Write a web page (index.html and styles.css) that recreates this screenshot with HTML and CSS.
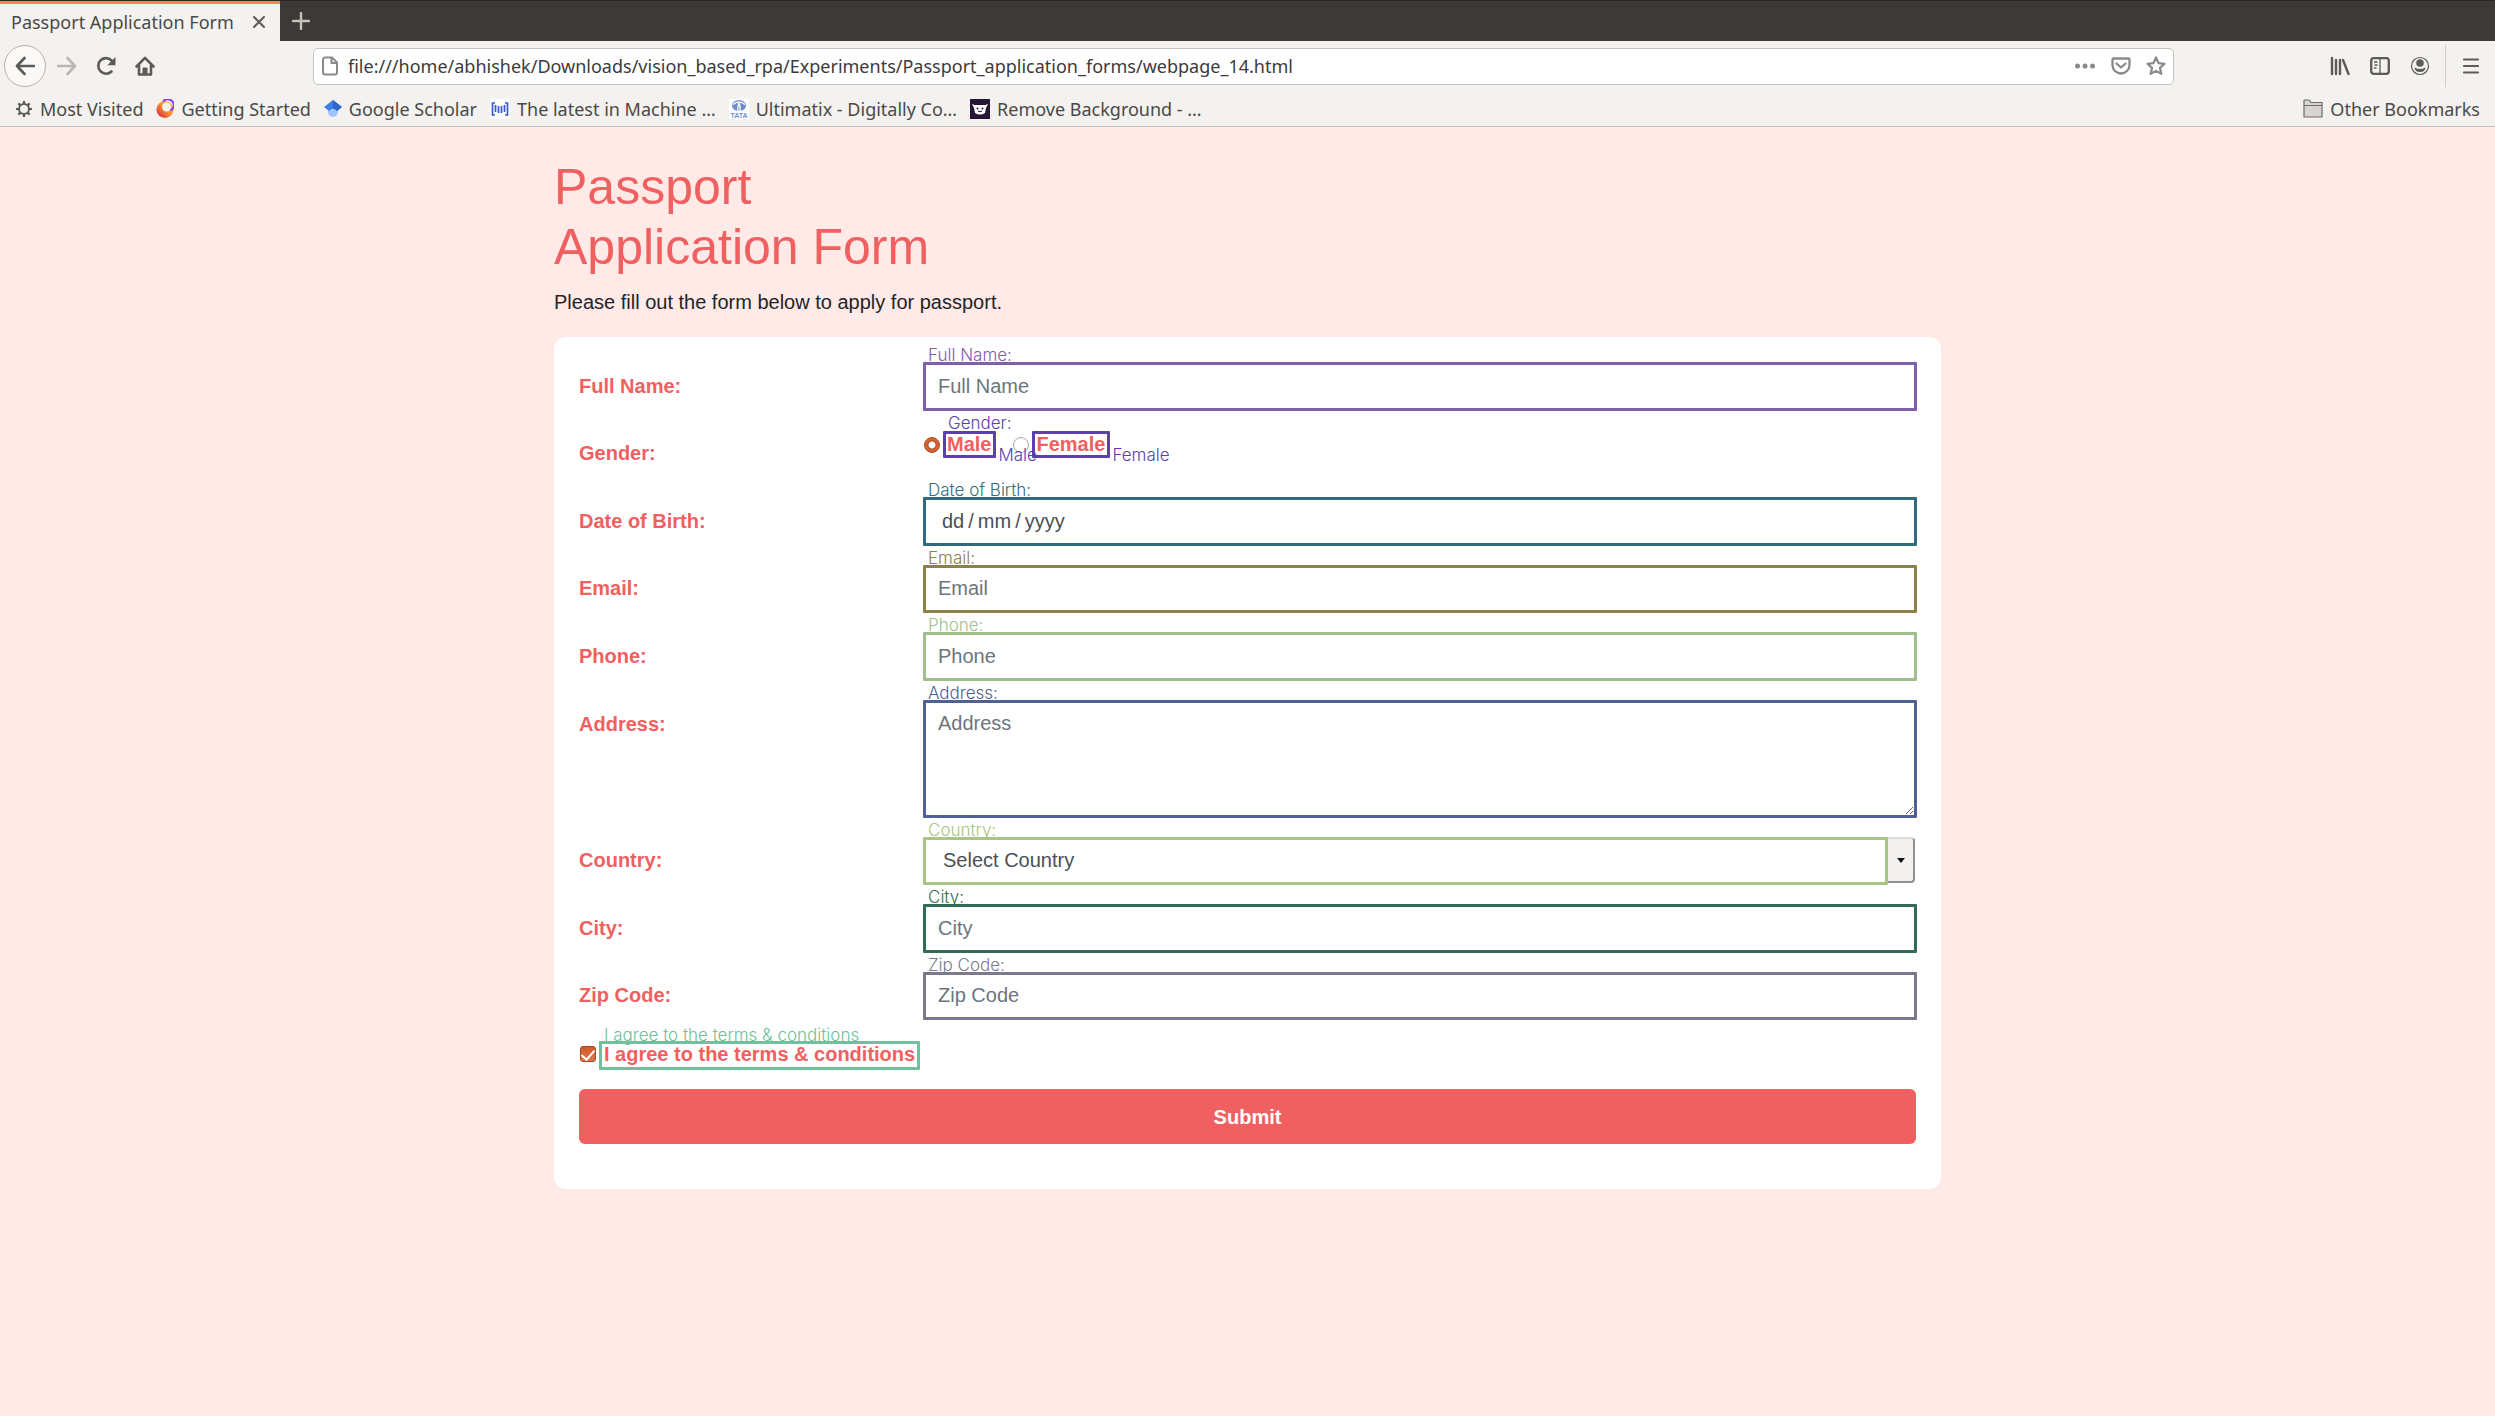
FILE: index.html
```html
<!DOCTYPE html>
<html lang="en">
<head>
<meta charset="utf-8">
<title>Passport Application Form</title>
<link rel="stylesheet" href="styles.css">
</head>
<body>
<header class="browser">
  <div class="tabs">
    <div class="tab"><span>Passport Application Form</span>
      <button class="icon-btn" aria-label="Close tab"><svg width="14" height="14" viewBox="0 0 14 14"><path d="M2 2l10 10M12 2L2 12" stroke="#5c5b59" stroke-width="2" stroke-linecap="round"/></svg></button>
    </div>
    <button class="icon-btn new-tab" aria-label="New tab"><svg width="18" height="18" viewBox="0 0 18 18"><path d="M9 1v16M1 9h16" stroke="#c5c2bb" stroke-width="2.4" stroke-linecap="round"/></svg></button>
  </div>
  <nav class="toolbar" aria-label="Navigation">
    <div class="nav-left">
      <button class="icon-btn back" aria-label="Back"><svg width="20" height="20" viewBox="0 0 20 20"><path d="M9.5 2L2 10l7.500 8M2 10h17" fill="none" stroke="#5c5b59" stroke-width="2.6" stroke-linecap="round" stroke-linejoin="round"/></svg></button>
      <button class="icon-btn" aria-label="Forward"><svg width="20" height="20" viewBox="0 0 20 20"><path d="M10.500 2L18 10l-7.500 8M18 10H1" fill="none" stroke="#bab8b6" stroke-width="2.600" stroke-linecap="round" stroke-linejoin="round"/></svg></button>
      <button class="icon-btn" aria-label="Reload"><svg width="20" height="20" viewBox="0 0 20 20"><path d="M16 4.800A7.800 7.800 0 1 0 15.500 15.500" fill="none" stroke="#5c5b59" stroke-width="2.600" stroke-linecap="round"/><path d="M19.500 1v8.200h-8.200z" fill="#5c5b59"/></svg></button>
      <button class="icon-btn" aria-label="Home"><svg width="20" height="20" viewBox="0 0 20 20"><path d="M1.500 10.500L10 1.800l8.500 8.700M4 9v9.500h12V9" fill="none" stroke="#5c5b59" stroke-width="2.600" stroke-linecap="round" stroke-linejoin="round"/><path d="M8 18v-6h4v6" fill="#5c5b59" stroke="#5c5b59"/></svg></button>
    </div>
    <div class="url">
      <svg width="18" height="20" viewBox="0 0 18 20"><path d="M4 1.500h7l5 5V16.500a2 2 0 0 1-2 2H4a2 2 0 0 1-2-2v-13a2 2 0 0 1 2-2zM10.500 1.500V7H16" fill="none" stroke="#8a8a8a" stroke-width="2"/></svg>
      <input type="text" aria-label="Address bar" value="file:///home/abhishek/Downloads/vision_based_rpa/Experiments/Passport_application_forms/webpage_14.html">
      <svg width="22" height="20" viewBox="0 0 22 20" fill="#8a8a8a"><circle cx="3.500" cy="10" r="2.500"/><circle cx="11" cy="10" r="2.500"/><circle cx="18.500" cy="10" r="2.500"/></svg>
      <svg width="20" height="20" viewBox="0 0 20 20" fill="none" stroke="#8a8a8a" stroke-width="2.300" stroke-linecap="round" stroke-linejoin="round"><path d="M2.500 2.500h15a1 1 0 0 1 1 1V9a8.500 8.500 0 0 1-17 0V3.500a1 1 0 0 1 1-1z"/><path d="M5.500 7.500l4.500 4 4.500-4"/></svg>
      <svg width="20" height="20" viewBox="0 0 20 20"><path d="M10 1.500l2.500 5.600 6 .7-4.500 4.100 1.300 6-5.300-3-5.300 3 1.300-6L1.500 7.800l6-.7z" fill="none" stroke="#8a8a8a" stroke-width="2.200" stroke-linejoin="round"/></svg>
    </div>
    <div class="nav-right">
      <button class="icon-btn" aria-label="Library"><svg width="20" height="20" viewBox="0 0 20 20"><path d="M2 2v16M6 4v14M10 4v14M13 4l5.500 14" stroke="#5c5b59" stroke-width="2.400" stroke-linecap="round"/></svg></button>
      <button class="icon-btn" aria-label="Sidebar"><svg width="20" height="20" viewBox="0 0 20 20"><rect x="1.200" y="2.200" width="17.600" height="15.600" rx="2.500" fill="none" stroke="#5c5b59" stroke-width="2.300"/><path d="M10 2v16M4 6h3.500M4.500 9h3M4 12h2.500" stroke="#5c5b59" stroke-width="1.300"/></svg></button>
      <button class="icon-btn" aria-label="Account"><svg width="20" height="20" viewBox="0 0 20 20"><circle cx="10" cy="10" r="8.500" fill="none" stroke="#5c5b59" stroke-width="1.200"/><circle cx="10" cy="7" r="3.800" fill="#5c5b59"/><path d="M4.500 11.500q5.500 3 11 0q-.5 4.500-5.500 4.500t-5.500-4.500z" fill="#5c5b59"/></svg></button>
      <button class="icon-btn menu" aria-label="Menu"><svg width="18" height="20" viewBox="0 0 18 20"><path d="M2 3.500h14M2 10h14M2 16.500h14" stroke="#5c5b59" stroke-width="2.200" stroke-linecap="round"/></svg></button>
    </div>
  </nav>
  <nav class="bookmarks" aria-label="Bookmarks">
    <a href="#"><svg width="18" height="20" viewBox="0 0 18 20"><circle cx="9" cy="10" r="5" fill="none" stroke="#5c5b59" stroke-width="2"/><path d="M9 2v3M9 15v3M1 10h3M14 10h3M3.400 4.400l2 2M12.600 13.600l2 2M14.600 4.400l-2 2M5.400 13.600l-2 2" stroke="#5c5b59" stroke-width="2.200"/></svg>Most Visited</a>
    <a href="#"><svg width="18" height="20" viewBox="0 0 18 20"><defs><linearGradient id="fox" x1="1" y1="0" x2="0" y2="1"><stop offset="0" stop-color="#ffd83a"/><stop offset=".5" stop-color="#fa8b2e"/><stop offset="1" stop-color="#c8174e"/></linearGradient></defs><circle cx="9" cy="10.500" r="8.500" fill="url(#fox)"/><circle cx="10.500" cy="8" r="4.500" fill="#f4f2f0"/><path d="M7 2.500a6 6 0 1 1 7.500 9" fill="none" stroke="#8b3ff0" stroke-width="2"/></svg>Getting Started</a>
    <a href="#"><svg width="18" height="20" viewBox="0 0 18 20"><circle cx="9" cy="13" r="5" fill="#a0c3ff"/><path d="M9 1L0 8l5 4q4-5 8 0l5-4z" fill="#3f7ee8"/><path d="M9 1l9 7-5 4q-2-2.500-4-2.500z" fill="#2f66c8"/></svg>Google Scholar</a>
    <a href="#"><svg width="20" height="20" viewBox="0 0 20 20"><path fill="#fff" d="M0 0h20v20H0z"/><path d="M5 4H2.500v12H5M15 4h2.500v12H15M5.500 6v7M8.500 7v7M11.500 7v7M14.500 6v7" fill="none" stroke="#3857d2" stroke-width="1.700"/></svg><span class="wide">The latest in Machine …</span></a>
    <a href="#"><svg width="20" height="20" viewBox="0 0 20 20"><path fill="#fff" d="M0 0h20v20H0z"/><ellipse cx="10" cy="6.500" rx="7" ry="5.500" fill="#6f8fca"/><path d="M8.500 12.500L9.500 5h1l1 7.500zM4 5.500q6-5 12 0" fill="none" stroke="#fff" stroke-width="1.300"/><text x="10" y="19" class="tata" text-anchor="middle">TATA</text></svg>Ultimatix - Digitally Co…</a>
    <a href="#"><svg width="20" height="20" viewBox="0 0 20 20"><path fill="#251536" d="M0 0h20v20H0z"/><path d="M2 5q3 1.500 4 1h8q1 .5 4-1l-2 4-1 5q-5 3-10 0L4 9z" fill="#fff"/><circle cx="7.500" cy="9.500" r="1" fill="#251536"/><circle cx="12.500" cy="9.500" r="1" fill="#251536"/><path d="M8 12q2 1.500 4 0" fill="none" stroke="#251536"/></svg>Remove Background - …</a>
    <a href="#" class="other"><svg width="20" height="20" viewBox="0 0 20 20"><path d="M1 18V2q0-1 1-1h4l2 2.500h11V18z" fill="#d6d5d3" stroke="#6c6b69" stroke-width="1.200"/><path d="M1 6.500h18" stroke="#6c6b69"/></svg>Other Bookmarks</a>
  </nav>
</header>
<main class="page">
  <h1>Passport<br>Application Form</h1>
  <p>Please fill out the form below to apply for passport.</p>
  <form class="card">
    <div class="row violet"><label for="name">Full Name:</label><div class="field"><span class="note">Full Name:</span><input class="control" id="name" type="text" placeholder="Full Name"></div></div>
    <div class="row short indigo" role="radiogroup" aria-labelledby="gender"><span class="label" id="gender">Gender:</span>
      <div class="field choices">
        <span class="note group-note">Gender:</span>
        <input type="radio" name="gender" id="male" checked><label for="male" class="boxed">Male<span class="note side-note" aria-hidden="true">Male</span></label>
        <input type="radio" name="gender" id="female"><label for="female" class="boxed">Female<span class="note side-note" aria-hidden="true">Female</span></label>
      </div>
    </div>
    <div class="row teal"><label for="dob">Date of Birth:</label><div class="field"><span class="note">Date of Birth:</span><input class="control date" id="dob" type="text" value="dd&thinsp;/&thinsp;mm&thinsp;/&thinsp;yyyy"></div></div>
    <div class="row short olive"><label for="email">Email:</label><div class="field"><span class="note">Email:</span><input class="control" id="email" type="email" placeholder="Email"></div></div>
    <div class="row sage"><label for="phone">Phone:</label><div class="field"><span class="note">Phone:</span><input class="control" id="phone" type="tel" placeholder="Phone"></div></div>
    <div class="row navy"><label for="address">Address:</label><div class="field"><span class="note">Address:</span><textarea class="control" id="address" placeholder="Address"></textarea></div></div>
    <div class="row short lime"><label for="country">Country:</label><div class="field select"><span class="note">Country:</span><select class="control" id="country"><option>Select Country</option></select><span class="arrow"></span></div></div>
    <div class="row green"><label for="city">City:</label><div class="field"><span class="note">City:</span><input class="control" id="city" type="text" placeholder="City"></div></div>
    <div class="row short slate"><label for="zip">Zip Code:</label><div class="field"><span class="note">Zip Code:</span><input class="control" id="zip" type="text" placeholder="Zip Code"></div></div>
    <div class="agree mint"><input type="checkbox" id="agree" checked><label for="agree" class="boxed"><span class="note" aria-hidden="true">I agree to the terms &amp; conditions</span>I agree to the terms &amp; conditions</label></div>
    <button class="submit" type="submit">Submit</button>
  </form>
</main>
</body>
</html>
```
FILE: styles.css
```css
* { box-sizing: border-box; }
body { margin: 0; min-height: 100vh; background: #ffeae8; color: #212529; font: 20px/30px "Liberation Sans", Arial, sans-serif; }
svg { display: block; flex: none; }
input, select, textarea, button { font: inherit; }

/* browser window */
.browser { font: 18px/24px "Noto Sans", "Open Sans", sans-serif; color: #4a4947; background: #f4f2f0; border-bottom: 1px solid #c5c0bb; }
.icon-btn { display: flex; align-items: center; justify-content: center; padding: 0; border: 0; background: none; }
.tabs { display: flex; height: 41px; background: #3c3a36; border-top: 1px solid #2a2825; }
.tab { display: flex; align-items: center; justify-content: space-between; width: 280px; padding: 0 14px 2px 11px; background: #f4f2f0; border-top: 3px solid #f5825b; white-space: nowrap; }
.new-tab { width: 42px; }
.toolbar { display: flex; align-items: center; height: 50px; }
.nav-left { display: flex; align-items: center; gap: 19px; width: 313px; padding-left: 4px; }
.nav-left .back { width: 42px; height: 42px; margin-right: -8px; border: 1px solid #b5b2ae; border-radius: 50%; background: #faf9f8; }
.url { display: flex; align-items: center; gap: 15px; flex: 1; height: 37px; padding: 0 7px; background: #fff; border: 1px solid #c8c2bc; border-radius: 5px; }
.url input { flex: 1; min-width: 0; padding: 0; margin-left: -6px; border: 0; outline: 0; background: none; color: #3b3b3b; }
.nav-right { display: flex; align-items: center; justify-content: flex-end; gap: 20px; width: 321px; padding-right: 15px; }
.menu { height: 42px; margin-left: -5px; padding-left: 16px; border-left: 1px solid #d0cdc9; }
.bookmarks { display: flex; align-items: center; gap: 13px; height: 35px; padding: 0 15px; }
.bookmarks a { display: flex; align-items: center; gap: 7px; color: inherit; text-decoration: none; white-space: nowrap; }
.bookmarks .other { margin-left: auto; }
.tata { font: bold 7px "Liberation Sans", sans-serif; fill: #6f8fca; }

/* page */
.page { max-width: 1387px; margin: 0 auto; padding: 30px 0; }
h1 { margin: 0 0 10px; color: #f16060; font-size: 50px; line-height: 60px; font-weight: 400; }
p { margin: 0 0 20px; }
.card { display: flex; flex-direction: column; gap: 19px; padding: 25px 25px 45px; background: #fff; border-radius: 12px; }
.row { display: grid; grid-template-columns: 344px 1fr; }
.row > label, .row > .label, .boxed { color: #f16060; font-weight: 700; }
.row > label, .row > .label { line-height: 48px; }
.field { position: relative; display: flex; height: 49px; margin-right: -1px; }
.short .field { height: 48px; }
.short > label, .short > .label { line-height: 47px; }
.control { display: block; width: 100%; height: 100%; margin: 0; padding: 0 12px; border: 3px solid var(--tone); border-radius: 1px; outline: 0; background: #fff; color: #495057; }
.short .control { padding-bottom: 2px; }
.control::placeholder { color: #6c757d; opacity: 1; }
.row .date { padding: 0 16px; }
.field:has(textarea) { height: 118px; }
textarea.control { padding: 5px 12px; line-height: 30px; }
.note { position: absolute; left: 5px; bottom: 100%; color: var(--tone); font: 300 17px/18px Inter, "Noto Sans", sans-serif; white-space: nowrap; pointer-events: none; }
.field > .note { margin-bottom: -2px; }
.select select { appearance: none; width: calc(100% - 29px); padding: 0 17px; }
.arrow { display: flex; align-items: center; justify-content: center; width: 27px; height: 46px; background: #f2f0ee; border: 2px solid #929292; border-top-color: #dadedf; border-left: 0; border-radius: 0 4px 4px 0; }
.arrow::after { content: ""; border: 4px solid transparent; border-top: 5px solid #111; border-bottom: 0; }

.choices { align-items: flex-start; gap: 3px; }
.choices input, .agree input { appearance: none; flex: none; width: 16px; height: 16px; margin: 7px 0 0 1px; border: 1px solid #aaa; border-radius: 50%; background: #fff; }
.choices input:checked { border-color: #a84a22; background: radial-gradient(circle, #fff 3px, #a84a22 4px, #d9622f 5px); }
.boxed { position: relative; border: 3px solid var(--tone); border-radius: 1px; line-height: 21px; white-space: nowrap; }
.choices .boxed { margin-top: 1px; padding: 0 2px 0 1px; }
.choices .boxed + input { margin-left: 14px; }
.choices .group-note { left: 25px; }
.side-note { left: 100%; bottom: auto; top: 12px; margin-left: 5px; }
.agree { display: flex; align-items: flex-start; gap: 3px; padding-top: 2px; }
.agree input { display: flex; justify-content: center; margin-top: 5px; border-color: #9c4a26; border-radius: 3px; background: linear-gradient(#cf5a28, #dd7a50); }
.agree input:checked::after { content: ""; width: 6px; height: 11px; border: solid #fff; border-width: 0 2px 2px 0; transform: rotate(42deg); }
.agree .boxed { height: 29px; padding: 0 2px; }
.agree .note { left: 2px; }
.submit { height: 55px; border: 0; border-radius: 6px; background: #f16060; color: #fff; font-weight: 700; }

.violet { --tone: #7c60aa; }
.indigo { --tone: #5d40b0; }
.teal { --tone: #336b7e; }
.olive { --tone: #8c8248; }
.sage { --tone: #a0bd8e; }
.navy { --tone: #506093; }
.lime { --tone: #aac582; }
.green { --tone: #336b55; }
.slate { --tone: #7b7a8d; }
.mint { --tone: #6fc09b; }
```
